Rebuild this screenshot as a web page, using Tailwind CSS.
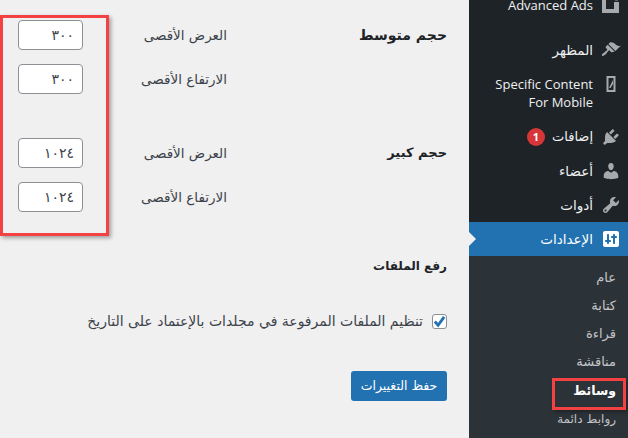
<!DOCTYPE html>
<html lang="ar" dir="rtl">
<head>
    <meta charset="UTF-8">
    <title>إعدادات الوسائط</title>
    <script src="https://cdn.jsdelivr.net/npm/@tailwindcss/browser@4"></script>
</head>
<body class="bg-[#f0f0f1] overflow-hidden font-['DejaVu_Sans',sans-serif]">

<div class="relative flex w-[628px] h-[438px] overflow-hidden">

    <!-- Sidebar -->
    <aside class="w-[159px] h-[438px] shrink-0 bg-[#1d2327] text-[#f0f0f1] text-[13.5px]">
        <div class="-mt-[11px] mb-[10px] h-[34px] flex items-center">
            <span class="w-[35px] flex justify-center">
                <svg class="w-[20px] h-[20px] fill-[#a7aaad]" viewBox="0 0 20 20"><path fill-rule="evenodd" d="M1 0h12v3H5v10h8V6h5v11H1z"/><circle cx="15.500" cy="2" r="2.500"/></svg>
            </span>
            <span class="font-['Open_Sans',sans-serif] text-[13px]">Advanced Ads</span>
        </div>
        <div class="h-[34px] flex items-center">
            <span class="w-[35px] flex justify-center">
                <svg class="w-[20px] h-[20px] fill-[#a7aaad]" viewBox="0 0 20 20"><path d="M14.480 11.060L7.410 3.990l1.500-1.500c.5-.56 2.300-.47 3.510.32 1.210.8 1.430 1.280 2.910 2.100 1.180.64 2.450 1.260 4.450.85zm-.71.71L6.700 4.700 4.930 6.470c-.39.39-.39 1.020 0 1.410l1.060 1.060c.39.39.39 1.030 0 1.420-.6.6-1.430 1.110-2.210 1.690-.35.26-.7.53-1.010.84C1.430 13.230.4 14.960 1.130 15.690c.73.730 2.460-.3 3.800-1.640.31-.31.58-.66.85-1.010.57-.78 1.080-1.610 1.690-2.210.39-.39 1.020-.39 1.410 0l1.060 1.060c.39.39 1.020.39 1.410 0z"/></svg>
            </span>
            <span>المظهر</span>
        </div>
        <div class="h-[53px] flex items-start pt-[6px]">
            <span class="w-[35px] flex justify-center pt-[1px]">
                <svg class="w-[20px] h-[20px]" viewBox="0 0 20 20"><path class="fill-[#a7aaad]" d="M5.500 2h9v16h-9z"/><path class="fill-[#1d2327]" d="M7.500 4h5v12h-5z"/><path class="fill-[#a7aaad]" d="M8 14l4-8v4l-2.500 4z"/></svg>
            </span>
            <span class="mt-[2px] font-['Open_Sans',sans-serif] text-[13px] leading-[18px] w-[104px]">Specific Content For Mobile</span>
        </div>
        <div class="h-[34px] flex items-center">
            <span class="w-[35px] flex justify-center">
                <svg class="w-[20px] h-[20px] fill-[#a7aaad]" viewBox="0 0 20 20"><path d="M13.110 4.360L9.870 7.600 8 5.730l3.240-3.240c.35-.34 1.050-.2 1.560.32.52.51.66 1.210.31 1.550zm-8 1.770l.91-1.120 9.010 9.010-1.190.84c-.71.71-2.630 1.160-3.820 1.160H6.140L4.900 17.260c-.59.59-1.540.59-2.120 0-.59-.58-.59-1.530 0-2.120l1.240-1.240v-3.880c0-1.130.4-3.190 1.090-3.890zm7.260 3.970l3.240-3.240c.34-.35 1.040-.21 1.550.31.52.51.66 1.210.31 1.550l-3.240 3.250z"/></svg>
            </span>
            <span class="text-[13px]">إضافات</span>
            <span class="mr-[7px] w-[18px] h-[18px] rounded-full bg-[#d63638] text-white text-[11px] font-bold flex items-center justify-center font-['Open_Sans',sans-serif]">1</span>
        </div>
        <div class="h-[34px] flex items-center">
            <span class="w-[35px] flex justify-center">
                <svg class="w-[20px] h-[20px] fill-[#a7aaad]" viewBox="0 0 20 20"><path d="M10 9.250c-2.270 0-2.730-3.440-2.730-3.440C7 4.020 7.820 2 9.970 2c2.160 0 2.980 2.020 2.710 3.810 0 0-.41 3.440-2.680 3.440zm0 2.570L12.720 10c2.390 0 4.520 2.330 4.520 4.530v2.490s-3.650 1.130-7.240 1.130c-3.650 0-7.240-1.130-7.240-1.130v-2.490c0-2.250 1.940-4.480 4.470-4.480z"/></svg>
            </span>
            <span>أعضاء</span>
        </div>
        <div class="h-[34px] flex items-center">
            <span class="w-[35px] flex justify-center">
                <svg class="w-[20px] h-[20px] fill-[#a7aaad]" viewBox="0 0 20 20"><path fill-rule="evenodd" d="M16.680 9.770c-1.340 1.340-3.300 1.670-4.950.99l-5.410 6.520c-.99.99-2.590.99-3.580 0s-.99-2.590 0-3.570l6.520-5.420c-.68-1.650-.35-3.610.99-4.950 1.280-1.280 3.120-1.620 4.720-1.060l-2.890 2.890 2.820 2.820 2.860-2.870c.53 1.580.18 3.390-1.080 4.650zM3.810 16.210c.4.39 1.040.39 1.430 0 .4-.4.4-1.040 0-1.430-.39-.4-1.030-.4-1.430 0-.39.39-.39 1.030 0 1.430z"/></svg>
            </span>
            <span>أدوات</span>
        </div>
        <div class="relative h-[34px] flex items-center bg-[#2271b1] text-white">
            <span class="w-[35px] flex justify-center">
                <svg class="w-[20px] h-[20px] fill-white" viewBox="0 0 20 20"><path fill-rule="evenodd" d="M18 16V4c0-1.100-.9-2-2-2H4c-1.100 0-2 .9-2 2v12c0 1.100.9 2 2 2h12c1.100 0 2-.9 2-2zM8 11h1c.55 0 1 .45 1 1s-.45 1-1 1H8v1c0 .55-.45 1-1 1s-1-.45-1-1v-1H5c-.55 0-1-.45-1-1s.45-1 1-1h1V6c0-.55.45-1 1-1s1 .45 1 1v5zm7-4c.55 0 1 .45 1 1s-.45 1-1 1h-1v5c0 .55-.45 1-1 1s-1-.45-1-1V9h-1c-.55 0-1-.45-1-1s.45-1 1-1h1V6c0-.55.45-1 1-1s1 .45 1 1v1h1z"/></svg>
            </span>
            <span>الإعدادات</span>
            <span class="absolute left-0 top-[10px] border-y-[7px] border-y-transparent border-l-[7px] border-l-[#f0f0f1]"></span>
        </div>
        <ul class="bg-[#2c3338] h-[182px] pt-[8px] text-[13px] text-[#c3c4c7]">
            <li class="h-[28px] leading-[28px] pr-[12px]">عام</li>
            <li class="h-[28px] leading-[28px] pr-[12px]">كتابة</li>
            <li class="h-[28px] leading-[28px] pr-[12px]">قراءة</li>
            <li class="h-[28px] leading-[28px] pr-[12px]">مناقشة</li>
            <li class="h-[29px] leading-[29px] pr-[12px] text-white text-[12.500px] font-bold">وسائط</li>
            <li class="h-[28px] leading-[28px] pr-[12px] text-[12px]">روابط دائمة</li>
        </ul>
    </aside>

    <!-- Settings form -->
    <main class="w-[469px] pr-[22px] pt-[20px] text-[#3c434a] text-[13.500px]">
        <div class="flex">
            <h2 class="w-[220px] pt-[5px] text-[14px] font-bold text-[#1d2327]">حجم متوسط</h2>
            <div class="flex flex-col gap-[14px]">
                <label class="flex items-center"><span class="w-[144px]">العرض الأقصى</span><input type="text" value="٣٠٠" class="w-[65px] h-[30px] px-[8px] bg-white border border-[#8c8f94] rounded-[4px] text-[14px]"></label>
                <label class="flex items-center"><span class="w-[144px]">الارتفاع الأقصى</span><input type="text" value="٣٠٠" class="w-[65px] h-[30px] px-[8px] bg-white border border-[#8c8f94] rounded-[4px] text-[14px]"></label>
            </div>
        </div>
        <div class="flex mt-[44px]">
            <h2 class="w-[220px] pt-[5px] text-[13px] font-bold text-[#1d2327]">حجم كبير</h2>
            <div class="flex flex-col gap-[14px]">
                <label class="flex items-center"><span class="w-[144px]">العرض الأقصى</span><input type="text" value="١٠٢٤" class="w-[65px] h-[30px] px-[8px] bg-white border border-[#8c8f94] rounded-[4px] text-[14px]"></label>
                <label class="flex items-center"><span class="w-[144px]">الارتفاع الأقصى</span><input type="text" value="١٠٢٤" class="w-[65px] h-[30px] px-[8px] bg-white border border-[#8c8f94] rounded-[4px] text-[14px]"></label>
            </div>
        </div>
        <h2 class="mt-[44px] text-[12px] tracking-[-0.5px] leading-[20px] font-bold text-[#1d2327]">رفع الملفات</h2>
        <label class="mt-[38px] flex items-center gap-[9px] h-[15px]">
            <span class="w-[15px] h-[15px] bg-white border border-[#8c8f94] rounded-[3px] flex items-center justify-center">
                <svg class="w-[13px] h-[13px] fill-none stroke-[#2271b1] stroke-[3]" viewBox="0 0 14 14"><path d="M2 7l3.500 4L12 2"/></svg>
            </span>
            <span class="text-[14px]">تنظيم الملفات المرفوعة في مجلدات بالإعتماد على التاريخ</span>
        </label>
        <button class="mt-[42px] w-[96px] h-[30px] rounded-[3px] bg-[#2271b1] text-white text-[12.500px]">حفظ التغييرات</button>
    </main>

    <!-- Annotation boxes -->
    <div class="absolute left-0 top-[15px] w-[109px] h-[221px] border-[3px] border-[#f44141] shadow-[2px_2px_4px_rgba(0,0,0,0.35)]"></div>
    <div class="absolute left-[552px] top-[378px] w-[74px] h-[32px] border-[3px] border-[#f44141] shadow-[2px_2px_4px_rgba(0,0,0,0.35)]"></div>
</div>

</body>
</html>
